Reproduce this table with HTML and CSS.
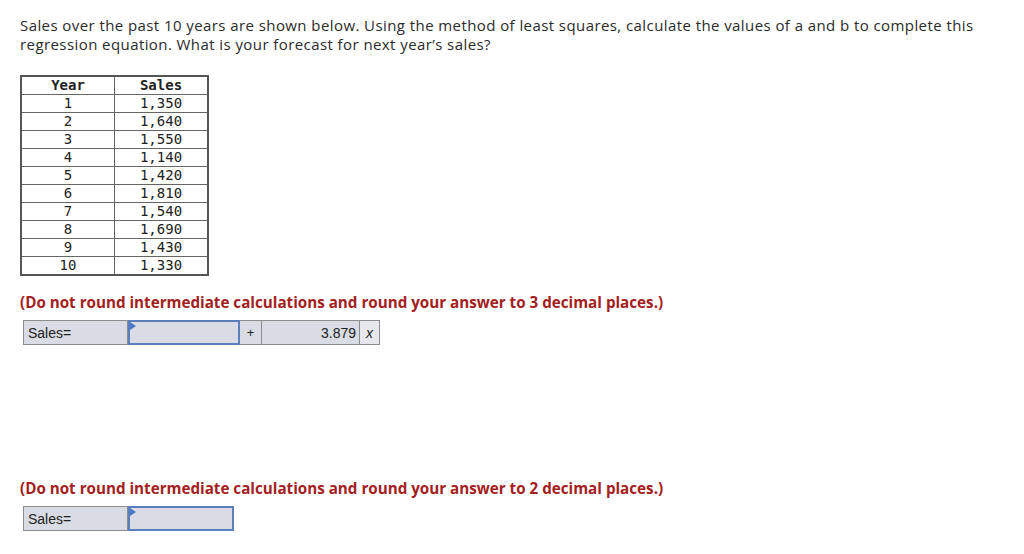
FILE: index.html
```html
<!DOCTYPE html>
<html>
<head>
<meta charset="utf-8">
<link rel="stylesheet" href="styles.css">
</head>
<body>
<div class="page">
  <p class="question">Sales over the past 10 years are shown below. Using the method of least squares, calculate the values of a and b to complete this regression equation. What is your forecast for next year’s sales?</p>
  <table class="data">
    <thead><tr><th>Year</th><th>Sales</th></tr></thead>
    <tbody>
      <tr><td>1</td><td>1,350</td></tr>
      <tr><td>2</td><td>1,640</td></tr>
      <tr><td>3</td><td>1,550</td></tr>
      <tr><td>4</td><td>1,140</td></tr>
      <tr><td>5</td><td>1,420</td></tr>
      <tr><td>6</td><td>1,810</td></tr>
      <tr><td>7</td><td>1,540</td></tr>
      <tr><td>8</td><td>1,690</td></tr>
      <tr><td>9</td><td>1,430</td></tr>
      <tr><td>10</td><td>1,330</td></tr>
    </tbody>
  </table>
  <p class="note">(Do not round intermediate calculations and round your answer to 3 decimal places.)</p>
  <div class="answer">
    <div class="cell label">Sales=</div>
    <div class="cell input"><span class="flag"></span></div>
    <div class="cell op">+</div>
    <div class="cell value">3.879</div>
    <div class="cell var">x</div>
  </div>
  <p class="note second">(Do not round intermediate calculations and round your answer to 2 decimal places.)</p>
  <div class="answer">
    <div class="cell label">Sales=</div>
    <div class="cell input wide"><span class="flag"></span></div>
  </div>
</div>
</body>
</html>
```
FILE: styles.css
```css
html, body {
  margin: 0;
  padding: 0;
  background: #fff;
}
.page {
  padding: 16px 0 0 20px;
  font-family: "Open Sans", "Liberation Sans", sans-serif;
  color: #2b2b2b;
}
.question {
  margin: 0;
  font-size: 15px;
  letter-spacing: 0.42px;
  line-height: 19px;
  width: 990px;
}
.data {
  margin-top: 21px;
  border-collapse: collapse;
  border: 2px solid #555;
  font-family: "DejaVu Sans Mono", monospace;
  font-size: 14px;
  color: #222;
}
.data th, .data td {
  border: 1px solid #666;
  height: 17px;
  padding: 0;
  line-height: 17px;
  text-align: center;
}
.data th:first-child, .data td:first-child { width: 92px; }
.data th:last-child, .data td:last-child { width: 92px; }
.data th { font-weight: bold; }
.note {
  margin: 17px 0 0 0;
  font-size: 15.2px;
  line-height: 19px;
  font-weight: bold;
  color: #a32121;
}
.note.second {
  margin-top: 134px;
}
.answer {
  display: flex;
  margin: 8px 0 0 3px;
  height: 25px;
  font-family: "Liberation Sans", Arial, sans-serif;
  font-size: 14px;
  color: #222;
}
.cell {
  box-sizing: border-box;
  height: 25px;
  background: #d9dce4;
  border: 1px solid #8c8c8c;
  display: flex;
  align-items: center;
}
.cell + .cell { border-left: none; }
.label {
  width: 105px;
  padding-left: 4px;
}
.input {
  position: relative;
  width: 112px;
  border: 2px solid #5b7fbd;
}
.answer .input { border-left: 2px solid #5b7fbd; }
.input.wide { width: 106px; }
.flag {
  position: absolute;
  left: 0;
  top: 0;
  width: 0;
  height: 0;
  border-top: 4px solid transparent;
  border-bottom: 4px solid transparent;
  border-left: 6px solid #4a78c4;
}
.op {
  width: 22px;
  justify-content: center;
  font-size: 13px;
}
.value {
  width: 98px;
  justify-content: flex-end;
  padding-right: 3px;
}
.var {
  width: 20px;
  justify-content: center;
  font-style: italic;
  background: #e6e8ee;
}
```
